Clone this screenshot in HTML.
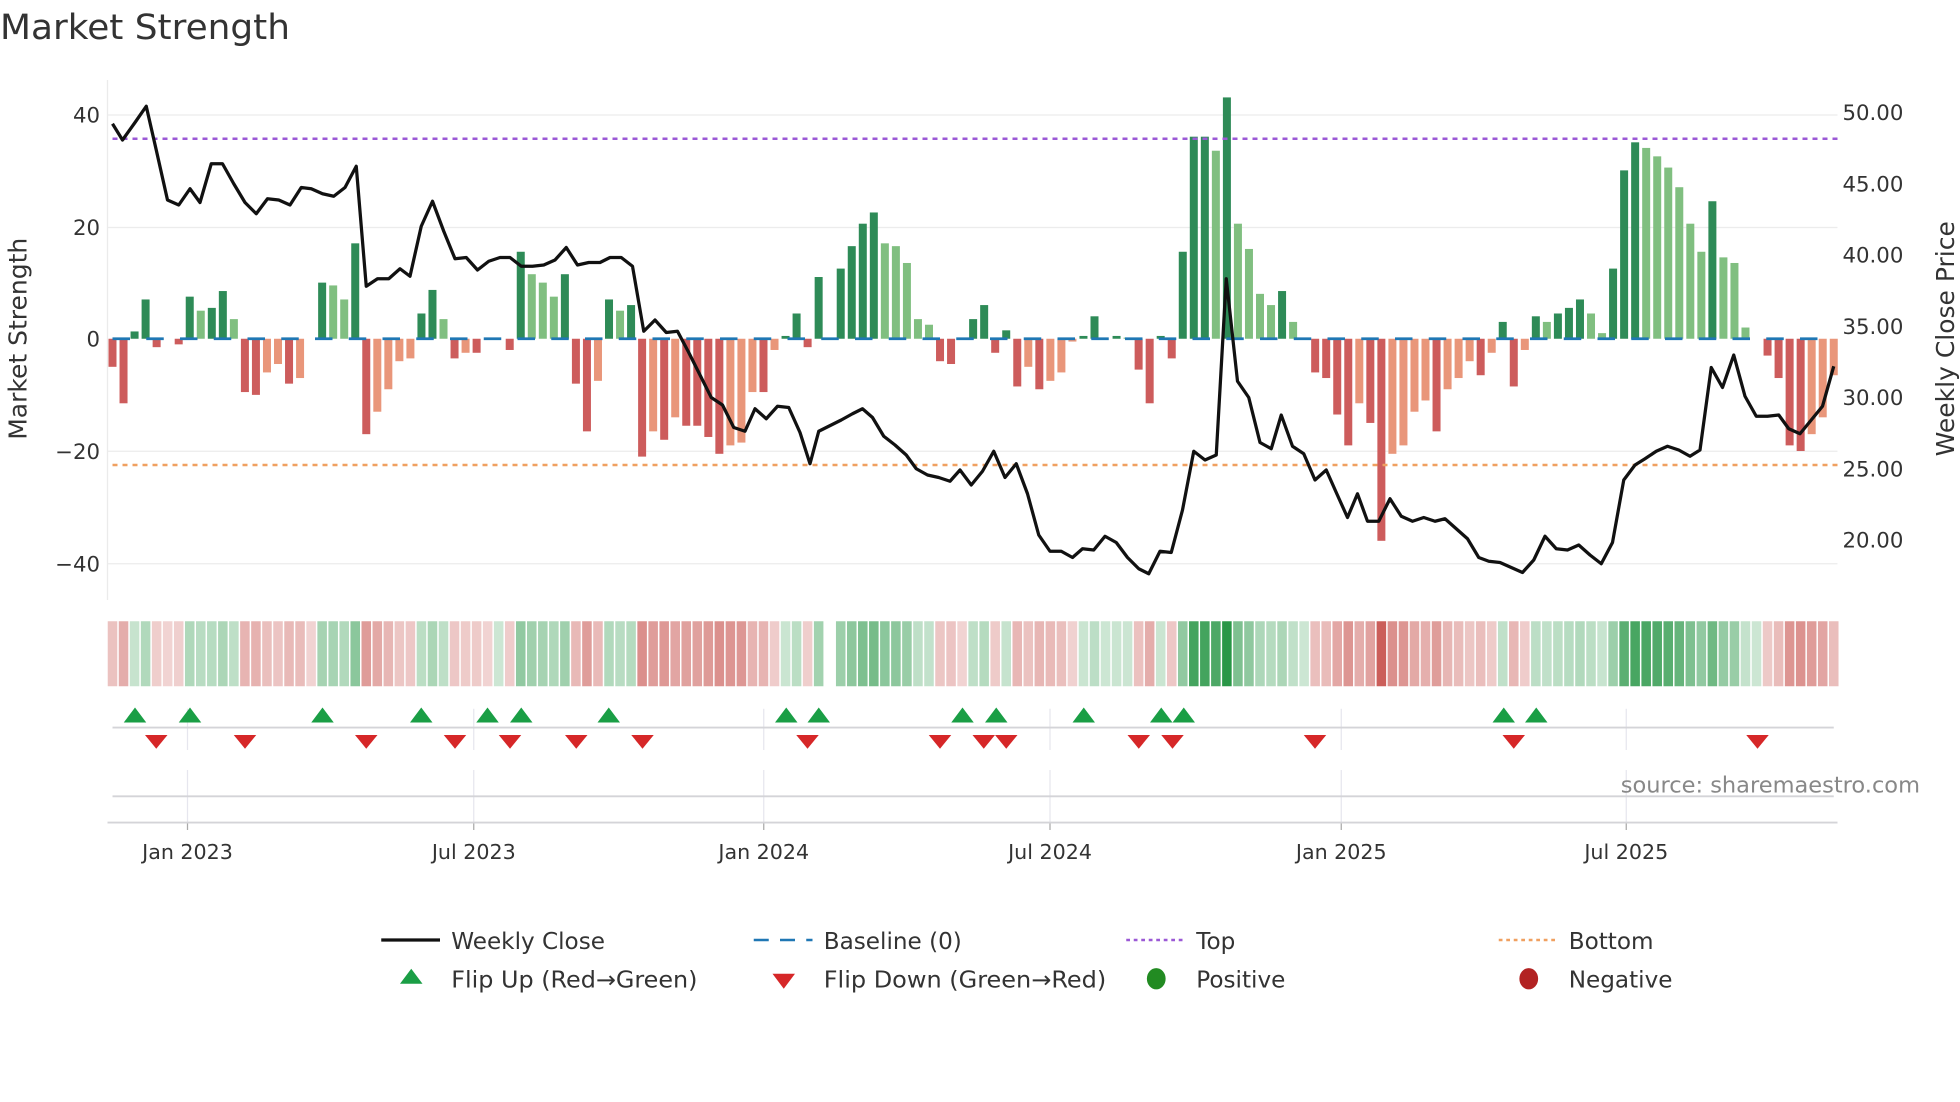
<!DOCTYPE html>
<html><head><meta charset="utf-8"><style>
html,body{margin:0;padding:0;background:#fff;}
svg{display:block;font-family:"DejaVu Sans","Liberation Sans",sans-serif;}
</style></head><body>
<svg id="s" width="1960" height="1102" viewBox="0 0 1568 881.6" xmlns="http://www.w3.org/2000/svg">
<rect width="1568" height="881.6" fill="#fff"/>
<text x="0" y="31" font-size="28" fill="#333" textLength="232" lengthAdjust="spacingAndGlyphs">Market Strength</text>
<g id="grid" stroke="#ececec" stroke-width="1">
<line x1="86" x2="1470" y1="92" y2="92"/><line x1="86" x2="1470" y1="182" y2="182"/>
<line x1="86" x2="1470" y1="361" y2="361"/><line x1="86" x2="1470" y1="451" y2="451"/>
</g>
<line x1="86" x2="86" y1="64" y2="480" stroke="#ebebeb"/>
<g font-size="17" fill="#333" text-anchor="end">
<text x="80" y="98">40</text><text x="80" y="188">20</text><text x="80" y="277">0</text>
<text x="80" y="367">−20</text><text x="80" y="457">−40</text>
</g>
<g font-size="17" fill="#333">
<text x="1474" y="96">50.00</text><text x="1474" y="153">45.00</text><text x="1474" y="210">40.00</text>
<text x="1474" y="267">35.00</text><text x="1474" y="324">30.00</text><text x="1474" y="381">25.00</text>
<text x="1474" y="438">20.00</text>
</g>
<text transform="translate(21,271) rotate(-90)" font-size="20" fill="#333" text-anchor="middle">Market Strength</text>
<text transform="translate(1563,271) rotate(-90)" font-size="20" fill="#333" text-anchor="middle">Weekly Close Price</text>
<g id="bars"></g>
<line x1="90" x2="1467" y1="271" y2="271" stroke="#1f77b4" stroke-width="2.2" stroke-dasharray="14 13"/>
<line x1="90" x2="1470" y1="111" y2="111" stroke="#9b59d6" stroke-width="2" stroke-dasharray="4 4"/>
<line x1="90" x2="1470" y1="372" y2="372" stroke="#f0a060" stroke-width="2" stroke-dasharray="4 4"/>
<polyline id="price" fill="none" stroke="#111" stroke-width="2.6" stroke-linejoin="round"/>
<g id="heat"></g>
<g stroke="#e6e6ee" stroke-width="1" id="vgrid"></g>
<line x1="90" x2="1467" y1="582" y2="582" stroke="#d4d4d8" stroke-width="1.5"/>
<line x1="90" x2="1467" y1="637" y2="637" stroke="#d4d4d8" stroke-width="1.5"/>
<line x1="86" x2="1470" y1="658" y2="658" stroke="#d4d4d8" stroke-width="1.5"/>
<g id="marks"></g>
<text x="1536" y="634" font-size="18" fill="#888" text-anchor="end">source: sharemaestro.com</text>
<g font-size="16.5" fill="#333" text-anchor="middle" id="dates"></g>
<g font-size="18.5" fill="#333">
<line x1="305" x2="352" y1="752" y2="752" stroke="#111" stroke-width="2.6"/>
<text x="361" y="759">Weekly Close</text>
<line x1="603" x2="650" y1="752" y2="752" stroke="#1f77b4" stroke-width="2" stroke-dasharray="12 9"/>
<text x="659" y="759">Baseline (0)</text>
<line x1="901" x2="946" y1="752" y2="752" stroke="#9b59d6" stroke-width="2" stroke-dasharray="3 3"/>
<text x="957" y="759">Top</text>
<line x1="1199" x2="1244" y1="752" y2="752" stroke="#f0a060" stroke-width="2" stroke-dasharray="3 3"/>
<text x="1255" y="759">Bottom</text>
<polygon points="320,787 338,787 329,775" fill="#1a9e45"/>
<text x="361" y="790" textLength="197" lengthAdjust="spacingAndGlyphs">Flip Up (Red→Green)</text>
<polygon points="618,779 636,779 627,791" fill="#d62728"/>
<text x="659" y="790" textLength="226" lengthAdjust="spacingAndGlyphs">Flip Down (Green→Red)</text>
<ellipse cx="925" cy="783" rx="7.5" ry="8.5" fill="#228b22"/>
<text x="957" y="790">Positive</text>
<ellipse cx="1223" cy="783" rx="7.5" ry="8.5" fill="#b22222"/>
<text x="1255" y="790">Negative</text>
</g>
</svg>
<script>
var NS="http://www.w3.org/2000/svg";
function el(t,a,p){var e=document.createElementNS(NS,t);for(var k in a)e.setAttribute(k,a[k]);document.getElementById(p).appendChild(e);return e;}
var v=[-5,-11.5,1.3,7,-1.5,0,-1,7.5,5,5.5,8.5,3.5,-9.5,-10,-6,-4.5,-8,-7,0,10,9.5,7,17,-17,-13,-9,-4,-3.5,4.5,8.7,3.5,-3.5,-2.5,-2.5,0,0,-2,15.5,11.5,10,7.5,11.5,-8,-16.5,-7.5,7,5,6,-21,-16.5,-18,-14,-15.5,-15.5,-17.5,-20.5,-19,-18.5,-9.5,-9.5,-2,0.5,4.5,-1.5,11,0,12.5,16.5,20.5,22.5,17,16.5,13.5,3.5,2.5,-4,-4.5,0,3.5,6,-2.5,1.5,-8.5,-5,-9,-7.5,-6,-0.5,0.5,4,0,0.5,0.2,-5.5,-11.5,0.5,-3.5,15.5,36,36,33.5,43,20.5,16,8,6,8.5,3,0,-6,-7,-13.5,-19,-11.5,-15,-36,-20.5,-19,-13,-11,-16.5,-9,-7,-4,-6.5,-2.5,3,-8.5,-2,4,3,4.5,5.5,7,4.5,1,12.5,30,35,34,32.5,30.5,27,20.5,15.5,24.5,14.5,13.5,2,0,-3,-7,-19,-20,-17,-14,-6.5];
var n=v.length,x0=90,x1=1467,st=(x1-x0)/(n-1);
for(var i=0;i<n;i++){var x=x0+i*st,val=v[i],p=i?v[i-1]:0;
 var dark=Math.abs(val)>=Math.abs(p)||(val*p<=0);
 var c=val>0?(dark?"#2e8b57":"#80bf80"):(dark?"#cd5c5c":"#e9967a");
 if(val!==0){var h=Math.abs(val)*4.49;el("rect",{x:x-3.2,y:val>0?271-h:271,width:6.4,height:h,fill:c},"bars");}
 var sv=val!==0?val:(p!==0?p:1);
 var a=val===0?0.24:Math.min(1,0.24+0.7*Math.abs(val)/40);
 var hc=sv>0?"rgba(40,150,70,"+a+")":"rgba(195,70,65,"+a+")";
 el("rect",{x:x-st/2+0.6,y:497,width:st-1.2,height:52,fill:(i===65)?"#fff":hc},"heat");
}
var pts=[90,99,98,112,108,98,117,85,125,120,134,160,143,164,152,151,160,162,169,131,178,131,187,147,196,162,205,171,214,159,223,160,232,164,241,150,249,151,258,155,267,157,276,150,285,133,293,229,302,223,311,223,320,215,328,221,337,181,346,161,355,185,364,207,373,206,382,216,391,209,400,206,408,206,417,213,426,213,435,212,444,208,453,198,462,212,471,210,480,210,488,206,497,206,506,213,515,265,524,256,533,266,542,265,551,282,560,300,569,318,578,324,587,342,596,345,604,327,613,335,622,325,631,326,640,346,648,371,655,345,665,340,673,336,682,331,690,327,698,334,707,349,716,356,725,364,733,375,742,380,751,382,760,385,768,376,777,388,786,377,795,361,804,382,813,371,822,395,831,428,840,441,849,441,858,446,866,439,875,440,884,429,893,434,902,446,911,455,919,459,928,441,937,442,946,408,955,361,964,368,973,364,981,223,990,305,999,318,1008,354,1017,359,1025,332,1034,357,1043,363,1052,384,1061,376,1069,394,1078,414,1086,395,1094,417,1103,417,1112,399,1121,413,1130,417,1139,414,1148,417,1156,415,1165,423,1174,431,1183,446,1191,449,1200,450,1209,454,1218,458,1227,448,1236,429,1245,439,1254,440,1263,436,1272,444,1281,451,1290,434,1299,384,1308,372,1316,367,1325,361,1334,357,1343,360,1352,365,1360,360,1369,294,1378,310,1387,284,1396,317,1405,333,1414,333,1423,332,1431,343,1440,347,1449,336,1458,325,1467,293];
var s="";for(var i=0;i<pts.length;i+=2)s+=pts[i]+","+pts[i+1]+" ";
document.getElementById("price").setAttribute("points",s);
var dts=[[150,"Jan 2023"],[379,"Jul 2023"],[611,"Jan 2024"],[840,"Jul 2024"],[1073,"Jan 2025"],[1301,"Jul 2025"]];
dts.forEach(function(d){el("line",{x1:d[0],x2:d[0],y1:567,y2:600},"vgrid");el("line",{x1:d[0],x2:d[0],y1:616,y2:658},"vgrid");
 el("line",{x1:d[0],x2:d[0],y1:658,y2:664,stroke:"#aaa"},"vgrid");var t=el("text",{x:d[0],y:687},"dates");t.textContent=d[1];});
[108,152,258,337,390,417,487,629,655,770,797,867,929,947,1203,1229].forEach(function(x){el("polygon",{points:(x-9)+",578 "+(x+9)+",578 "+x+",566",fill:"#1a9e45"},"marks");});
[125,196,293,364,408,461,514,646,752,787,805,911,938,1052,1211,1406].forEach(function(x){el("polygon",{points:(x-9)+",588 "+(x+9)+",588 "+x+",599",fill:"#d62728"},"marks");});
</script>
</body></html>
